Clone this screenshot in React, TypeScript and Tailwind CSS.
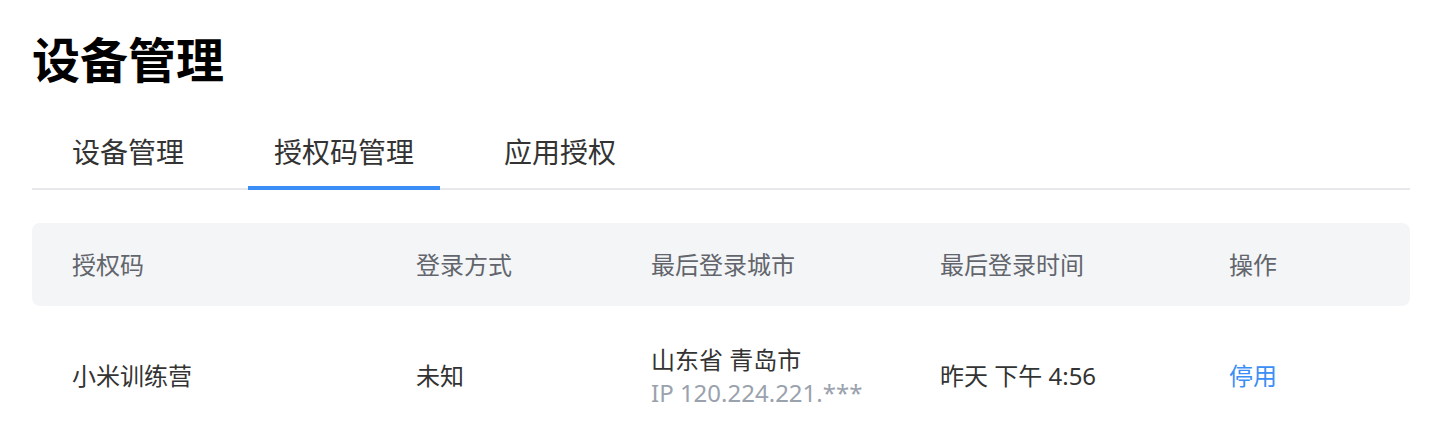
export default function App() {
  const tabs = ['设备管理', '授权码管理', '应用授权']
  const active = 1

  return (
    <div
      className="min-h-screen bg-white pl-8 pr-[41px] pt-[26px] text-[#333]"
      style={{ fontFamily: '"Noto Sans", "Noto Sans CJK SC", sans-serif' }}
    >
      {/* Title */}
      <h1 className="text-[48px] font-bold leading-[68px] text-black">设备管理</h1>

      {/* Tabs */}
      <div className="mt-[38px] flex gap-[38px] border-b-2 border-[#e6e8eb] pl-[14px]">
        {tabs.map((t, i) => (
          <div
            key={t}
            className={
              i === active
                ? '-mb-[2px] border-b-4 border-[#3a8ef6] px-[26px] pb-[14px] text-[28px] leading-[40px] text-[#333]'
                : '-mb-[2px] border-b-4 border-transparent px-[26px] pb-[14px] text-[28px] leading-[40px] text-[#333]'
            }
          >
            {t}
          </div>
        ))}
      </div>

      {/* Table */}
      <div className="mt-[33px]">
        <div className="grid h-[83px] grid-cols-[344px_235px_289px_289px_1fr] items-center rounded-lg bg-[#f4f5f7] px-10 text-[24px] text-[#62656c]">
          <div>授权码</div>
          <div>登录方式</div>
          <div>最后登录城市</div>
          <div>最后登录时间</div>
          <div>操作</div>
        </div>
        <div className="grid h-[140px] grid-cols-[344px_235px_289px_289px_1fr] items-center px-10 text-[24px] text-[#333]">
          <div>小米训练营</div>
          <div>未知</div>
          <div className="flex flex-col leading-[33px]">
            <span>山东省 青岛市</span>
            <span className="text-[#9aa2ad]">IP 120.224.221.***</span>
          </div>
          <div>昨天 下午 4:56</div>
          <div className="text-[#3a8ef6]">停用</div>
        </div>
      </div>
    </div>
  )
}
